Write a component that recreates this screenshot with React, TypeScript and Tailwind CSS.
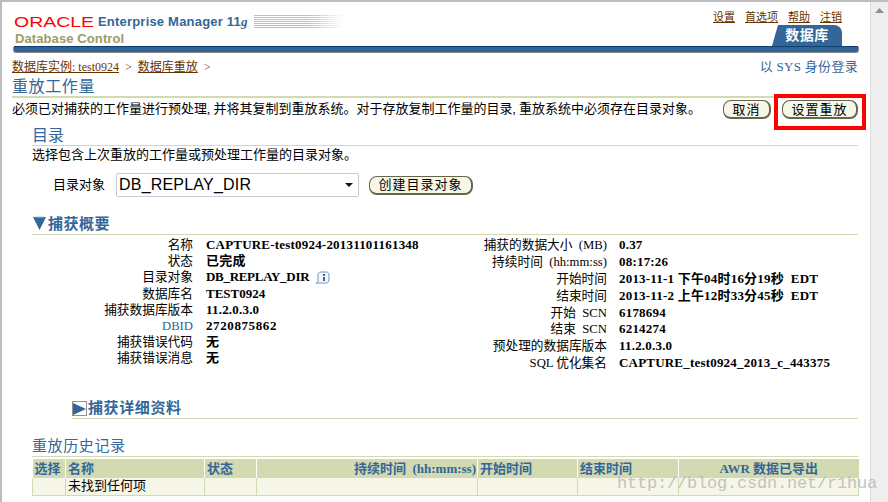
import React from 'react';

const serif = '[font-family:"Liberation_Serif","Noto_Sans_CJK_SC",serif]';

const captureLeft: [React.ReactNode, React.ReactNode][] = [
  ['名称', 'CAPTURE-test0924-20131101161348'],
  ['状态', '已完成'],
  ['目录对象', <span className="flex items-center gap-[6px] tracking-[-0.3px]">DB_REPLAY_DIR <InfoIcon /></span>],
  ['数据库名', <span className="tracking-[0px]">TEST0924</span>],
  ['捕获数据库版本', '11.2.0.3.0'],
  [<span className="text-[#2f5f8f]">DBID</span>, <span className="tracking-[0.6px]">2720875862</span>],
  ['捕获错误代码', '无'],
  ['捕获错误消息', '无'],
];

const captureRight: [React.ReactNode, React.ReactNode][] = [
  ['捕获的数据大小\u00a0 (MB)', '0.37'],
  ['持续时间\u00a0 (hh:mm:ss)', '08:17:26'],
  ['开始时间', '2013-11-1 下午04时16分19秒\u00a0 EDT'],
  ['结束时间', '2013-11-2 上午12时33分45秒\u00a0 EDT'],
  ['开始\u00a0 SCN', '6178694'],
  ['结束\u00a0 SCN', '6214274'],
  ['预处理的数据库版本', '11.2.0.3.0'],
  ['SQL 优化集名', 'CAPTURE_test0924_2013_c_443375'],
];

function InfoIcon() {
  return (
    <svg width="15" height="13" viewBox="0 0 15 13" fill="none">
      <path d="M1 12 C3 12 3 11 3 9 L3 4 C3 2 4 1 6 1 L11 1 C13 1 14 2 14 4 L14 9 C14 11 13 12 11 12 Z" stroke="#6f9ac6" strokeWidth="1" fill="#f3f7fb" />
      <rect x="8" y="3" width="2" height="2" fill="#336699" />
      <rect x="8" y="6" width="2" height="4" fill="#336699" />
    </svg>
  );
}

function Btn({ label, className }: { label: string; className: string }) {
  return (
    <button className={`h-[19px] rounded-[8px] border border-[#66664d] border-r-2 border-b-2 bg-[#f7f7e7] text-[13px] leading-none text-black tracking-[1px] ${className}`}>
      {label}
    </button>
  );
}

function DetailRows({ rows, cols }: { rows: [React.ReactNode, React.ReactNode][]; cols: string }) {
  return (
    <div className={`grid ${cols}`}>
      {rows.map(([k, v], i) => (
        <React.Fragment key={i}>
          <div className="text-right text-[12.7px] text-black whitespace-nowrap">{k}</div>
          <div className="text-[13px] font-bold tracking-[0.2px] text-black whitespace-nowrap">{v}</div>
        </React.Fragment>
      ))}
    </div>
  );
}

function Heading({ children, className = '' }: { children: React.ReactNode; className?: string }) {
  return (
    <div className={`border-b border-[#d3d9b1] leading-[19px] text-[#336699] ${className}`}>{children}</div>
  );
}

export default function App() {
  return (
    <div className={`relative flex h-[502px] w-[888px] overflow-hidden border-t-2 border-l-2 border-[#bdbdbd] bg-white ${serif}`}>
      <main className="w-[868px] shrink-0">
        {/* branding */}
        <div className="flex h-[44px] justify-between pl-[12px] pr-[28px]">
          <div className="pt-[12px]">
            <div className="flex h-[15px] items-center">
              <svg width="82" height="14" className="shrink-0">
                <text x="0" y="12" textLength="80" lengthAdjust="spacingAndGlyphs" fontSize="14" fill="#ff0000" fontFamily="Liberation Sans">ORACLE</text>
              </svg>
              <span className="ml-[2px] whitespace-nowrap text-[13px] font-bold leading-none tracking-[0.2px] text-[#336699] [font-family:'Liberation_Sans',sans-serif]">
                Enterprise Manager 11<i className="[font-family:'Liberation_Serif',serif]">g</i>
              </span>
              <svg width="90" height="13" className="ml-[6px] shrink-0">
                <defs>
                  <linearGradient id="fade">
                    <stop offset="0.6" stopColor="#c5c785" />
                    <stop offset="1" stopColor="#ffffff" />
                  </linearGradient>
                </defs>
                {[0, 2, 4, 6, 8, 10, 12].map(y => (
                  <rect key={y} x="0" y={y} width="90" height="1" fill="url(#fade)" />
                ))}
              </svg>
            </div>
            <div className="mt-[2px] whitespace-nowrap pl-[1px] text-[13px] font-bold leading-[16px] tracking-[0.1px] text-[#9c9c66] [font-family:'Liberation_Sans',sans-serif]">
              Database Control
            </div>
          </div>
          <div className="flex flex-col items-end pt-[8px]">
            <div className="flex gap-[10px] text-[11px] leading-[14px] text-[#663300] underline">
              <span>设置</span>
              <span>首选项</span>
              <span>帮助</span>
              <span>注销</span>
            </div>
            <div className="mt-[1px] flex h-[21px] w-[70px] items-center justify-center rounded-tr-[8px] bg-[#336699] text-[14px] font-bold tracking-[0.5px] text-white [clip-path:polygon(6px_0,100%_0,100%_100%,0_100%)]">
              数据库
            </div>
          </div>
        </div>
        {/* blue bar */}
        <div className="ml-[12px] mr-[12px] h-[6px] rounded-b-[3px] border-t border-[#0d3f6e] bg-[#2f6396] shadow-[1px_1px_0_#8a8a8a,-1px_1px_0_#8a8a8a]" />

        {/* breadcrumbs */}
        <div className="mt-[7px] flex items-center justify-between pl-[10px] pr-[12px] text-[12px] leading-[16px]">
          <div className="flex gap-[6px] text-[#663300]">
            <span className="underline">数据库实例: test0924</span>
            <span>&gt;</span>
            <span className="underline">数据库重放</span>
            <span>&gt;</span>
          </div>
          <span className="text-[13px] tracking-[0.3px] text-[#336699]">以 SYS 身份登录</span>
        </div>

        <div className="mt-[2px] pl-[10px] pr-[12px]">
          <Heading className="border-b-2 text-[16px] tracking-[0.6px]">重放工作量</Heading>
          <div className="mt-[2px] flex justify-between">
            <div className="pt-[1px] text-[13px] leading-[16px] text-black">必须已对捕获的工作量进行预处理, 并将其复制到重放系统。对于存放复制工作量的目录, 重放系统中必须存在目录对象。</div>
            <div className="flex gap-[11px]">
              <Btn label="取消" className="w-[48px]" />
              <Btn label="设置重放" className="w-[76px]" />
            </div>
          </div>
        </div>

        <div className="mt-[7px] pl-[30px] pr-[12px]">
          <Heading className="text-[16px]">目录</Heading>
          <div className="mt-[1px] text-[13px] leading-[16px] text-black">选择包含上次重放的工作量或预处理工作量的目录对象。</div>
          <div className="mt-[10px] flex items-center pl-[21px]">
            <span className="w-[63px] text-[13px] text-black">目录对象</span>
            <div className="flex h-[24px] w-[243px] items-center justify-between rounded-[2px] border border-[#c6cbd8] pl-[2px] pr-[5px] text-[16px] tracking-[0.2px] text-black [font-family:'Liberation_Sans',sans-serif]">
              DB_REPLAY_DIR
              <svg width="8" height="4" viewBox="0 0 8 4"><path d="M0 0H8L4 4Z" fill="#111" /></svg>
            </div>
            <Btn label="创建目录对象" className="ml-[10px] w-[104px]" />
          </div>

          <div className="relative mt-[18px]">
            <Heading className="pl-[16px] text-[15px] font-bold tracking-[0.5px]">捕获概要</Heading>
            <svg width="13" height="14" viewBox="0 0 13 14" className="absolute left-[1px] top-[1px]">
              <path d="M0 1H13L6.5 14Z" fill="#336699" />
              <path d="M2 1H11" stroke="#a9c4de" />
            </svg>
          </div>

          <div className="mt-[2px] flex leading-[16.2px]">
            <DetailRows rows={captureLeft} cols="w-[445px] grid-cols-[161px_auto] gap-x-[13px] auto-rows-[16.2px]" />
            <DetailRows rows={captureRight} cols="grid-cols-[130px_auto] gap-x-[12px] auto-rows-[16.9px]" />
          </div>

          <div className="relative ml-[40px] mt-[27px]">
            <Heading className="pl-[16px] text-[15px] font-bold tracking-[0.6px]">捕获详细资料</Heading>
            <svg width="15" height="15" viewBox="0 0 15 15" className="absolute left-0 top-[2px]">
              <rect x="0.5" y="0.5" width="14" height="14" fill="none" stroke="#222" strokeDasharray="1 1" />
              <path d="M1 2L14 8L1 14Z" fill="#336699" />
            </svg>
          </div>

          <Heading className="mt-[18px] text-[15px] tracking-[0.6px]">重放历史记录</Heading>
          <table className="mt-[2px] w-[827px] table-fixed border-collapse text-[13px] leading-[16px]">
            <colgroup>
              <col className="w-[33px]" />
              <col className="w-[139px]" />
              <col className="w-[52px]" />
              <col className="w-[221px]" />
              <col className="w-[100px]" />
              <col className="w-[101px]" />
              <col />
            </colgroup>
            <thead>
              <tr className="h-[19px] bg-[#d3d9b1] font-bold text-[#336699]">
                <th className="border-r border-white pl-[2px] text-left whitespace-nowrap">选择</th>
                <th className="border-r border-white pl-[2px] text-left whitespace-nowrap">名称</th>
                <th className="border-r border-white pl-[2px] text-left whitespace-nowrap">状态</th>
                <th className="border-r border-white pr-[1px] text-right whitespace-nowrap">持续时间&nbsp; (hh:mm:ss)</th>
                <th className="border-r border-white pl-[2px] text-left whitespace-nowrap">开始时间</th>
                <th className="border-r border-white pl-[2px] text-left whitespace-nowrap">结束时间</th>
                <th className="text-center whitespace-nowrap">AWR 数据已导出</th>
              </tr>
            </thead>
            <tbody>
              <tr className="h-[17px] border-b border-[#d3d9b1] bg-[#f5f6e8] text-black">
                <td className="border-x border-[#d3d9b1]" />
                <td className="border-r border-[#d3d9b1] pl-[2px] whitespace-nowrap">未找到任何项</td>
                <td className="border-r border-[#d3d9b1]" />
                <td className="border-r border-[#d3d9b1]" />
                <td className="border-r border-[#d3d9b1]" />
                <td className="border-r border-[#d3d9b1]" />
                <td className="border-r border-[#d3d9b1]" />
              </tr>
            </tbody>
          </table>
        </div>
      </main>

      {/* scrollbar */}
      <div className="flex w-[18px] shrink-0 justify-center border-l border-[#dcdcdc] bg-[#eeeeee] pt-[6px]">
        <svg width="9" height="5" viewBox="0 0 9 5"><path d="M0 5L4.5 0L9 5Z" fill="#8f8f8f" /></svg>
      </div>

      {/* red highlight box */}
      <div className="absolute left-[772px] top-[92px] h-[36px] w-[92px] border-4 border-[#ff0000]" />
      {/* watermark */}
      <div className="absolute left-[615px] top-[469px] text-[17px] tracking-[-0.2px] text-[#bdbdbd] opacity-90 [font-family:'Liberation_Mono',monospace]">
        http://blog.csdn.net/r1hua
      </div>
    </div>
  );
}
